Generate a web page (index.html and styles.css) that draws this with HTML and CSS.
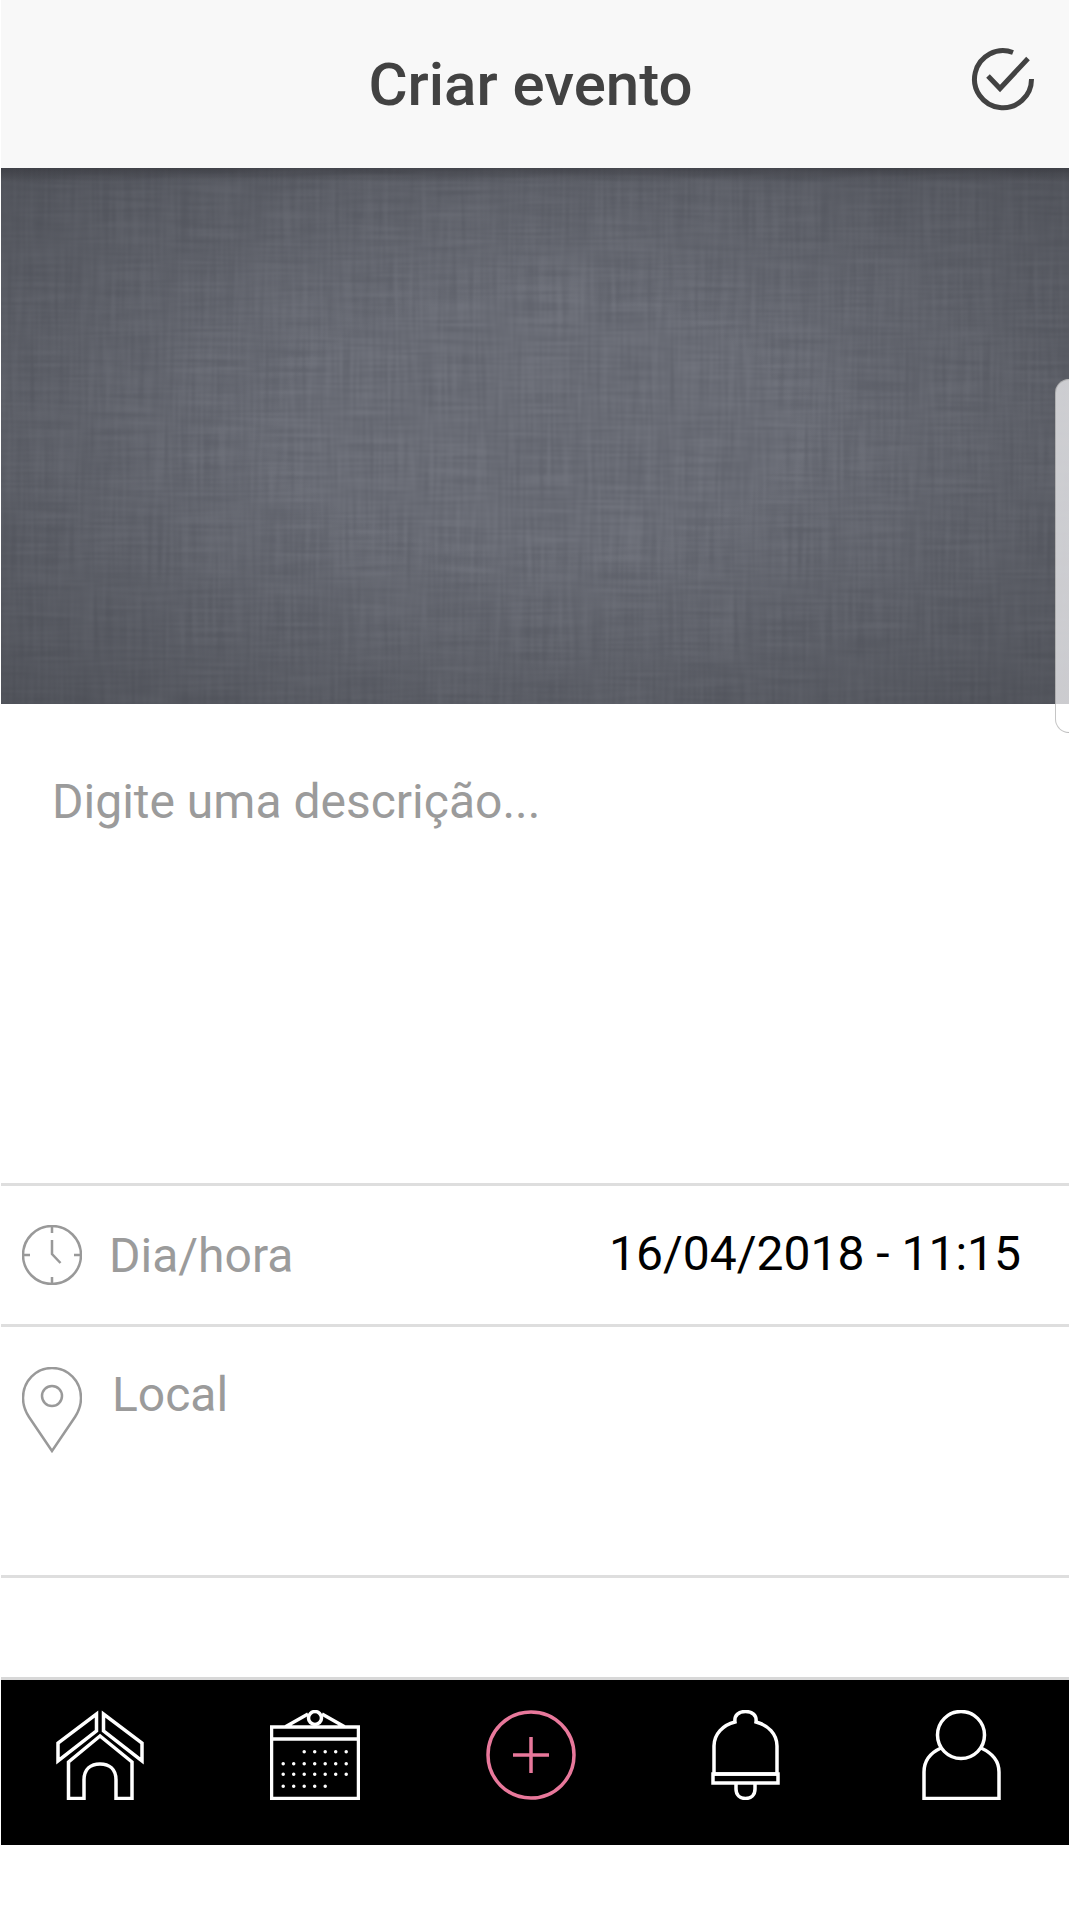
FILE: index.html
```html
<!DOCTYPE html>
<html lang="pt">
<head>
<meta charset="utf-8">
<title>Criar evento</title>
<link rel="stylesheet" href="styles.css">
</head>
<body>
<div class="app">
  <header class="topbar">
    <h1 class="title">Criar evento</h1>
    <svg class="check" viewBox="0 0 70 70" aria-hidden="true">
      <path d="M45 8.500A28.500 28.500 0 1 0 63.500 35" />
      <path d="M20 32L32 44.500L60 14.500" />
    </svg>
  </header>

  <section class="photo">
    <svg class="linen" aria-hidden="true">
      <filter id="weave" x="0" y="0" width="100%" height="100%" color-interpolation-filters="sRGB">
        <feTurbulence type="fractalNoise" baseFrequency="0.012 0.4" numOctaves="2" seed="4" result="h"/>
        <feTurbulence type="fractalNoise" baseFrequency="0.4 0.012" numOctaves="2" seed="9" result="v"/>
        <feComposite in="h" in2="v" operator="arithmetic" k1="0" k2="0.5" k3="0.5" k4="0"/>
        <feColorMatrix type="matrix" values="3 0 0 0 -1  3 0 0 0 -1  3 0 0 0 -1  0 0 0 0 1"/>
        <feGaussianBlur stdDeviation="0.9"/>
      </filter>
      <rect width="100%" height="100%" filter="url(#weave)"/>
    </svg>
    <div class="vignette"></div>
  </section>

  <section class="description">
    <p class="placeholder">Digite uma descrição...</p>
  </section>

  <section class="row row-date">
    <svg class="field-icon" viewBox="0 0 60 60" aria-hidden="true">
      <circle cx="30" cy="30" r="29"/>
      <path d="M30 1V8M30 52V59M1 30H8M52 30H59M30 15V29L38.500 38"/>
    </svg>
    <span class="label">Dia/hora</span>
    <span class="value">16/04/2018 - 11:15</span>
  </section>

  <section class="row row-place">
    <svg class="field-icon pin" viewBox="0 0 60 86" aria-hidden="true">
      <path d="M30 84L7 50C3 44 1 38 1 31C1 14 14 1 30 1C46 1 59 14 59 31C59 38 57 44 53 50Z"/>
      <circle cx="30" cy="29" r="10"/>
    </svg>
    <span class="label label-place">Local</span>
  </section>

  <div class="spacer"></div>

  <nav class="tabbar">
    <svg class="tab" viewBox="0 0 90 90" aria-hidden="true">
      <path d="M41.500 4V21L3 51V33ZM48.500 4V21L87 51V33Z"/>
      <path d="M45 26L13.500 52V88.500H29V70C29 59 36 54 45 54C54 54 61 59 61 70V88.500H77V52Z"/>
    </svg>
    <svg class="tab" viewBox="0 0 90 90" aria-hidden="true">
      <path d="M1.500 17H88.500V88.500H1.500ZM1.500 29H88.500M15 17L38 4M75 17L52 4"/>
      <circle cx="45" cy="8" r="6.500"/>
      <path class="dots" d="M34.200 41.700h.01M44.700 41.700h.01M55.200 41.700h.01M65.700 41.700h.01M76.200 41.700h.01M13.200 53.700h.01M23.700 53.700h.01M34.200 53.700h.01M44.700 53.700h.01M55.200 53.700h.01M65.700 53.700h.01M76.200 53.700h.01M13.200 64.300h.01M23.700 64.300h.01M34.200 64.300h.01M44.700 64.300h.01M55.200 64.300h.01M65.700 64.300h.01M76.200 64.300h.01M13.200 76.300h.01M23.700 76.300h.01M34.200 76.300h.01M44.700 76.300h.01M55.200 76.300h.01"/>
    </svg>
    <svg class="tab tab-add" viewBox="0 0 90 90" aria-hidden="true">
      <circle cx="45" cy="45" r="43"/>
      <path d="M45 27V63M27 45H63"/>
    </svg>
    <svg class="tab" viewBox="0 0 90 90" aria-hidden="true">
      <path d="M13 64V36C13 24 22 15 34 12C33 5 38 1.500 44.500 1.500C51 1.500 56 5 55 12C67 15 76 24 76 36V64Z"/>
      <path d="M12 64H77V73H12ZM35 73V79C35 85 39 88.500 44.500 88.500C50 88.500 54 85 54 79V73"/>
    </svg>
    <svg class="tab" viewBox="0 0 90 90" aria-hidden="true">
      <circle cx="44" cy="25" r="23.500"/>
      <path d="M24 38C13 43 7 51 7 62V88.500H82V62C82 51 75 43 64 38"/>
    </svg>
  </nav>

  <div class="edge-handle"></div>
</div>
</body>
</html>
```

FILE: styles.css
```css
* { box-sizing: border-box; }
html, body { margin: 0; padding: 0; background: #fff; }
body { font-family: Roboto, "Noto Sans", sans-serif; }

.app {
  position: relative;
  width: 1068px;
  margin-left: 1px;
  display: flex;
  flex-direction: column;
}

.topbar {
  height: 168px;
  background: #f8f8f8;
  display: flex;
  align-items: center;
  padding-left: 92px;
  padding-right: 31px;
}
.title {
  flex: 1;
  margin: 0;
  text-align: center;
  font-size: 60px;
  font-weight: 500;
  color: #424242;
  padding-top: 1px;
}
.check {
  width: 70px;
  height: 70px;
  margin-top: -10px;
  fill: none;
  stroke: #424242;
  stroke-width: 5;
}

.photo {
  position: relative;
  height: 536px;
  background: #686b75;
  overflow: hidden;
}
.linen { display: block; width: 100%; height: 100%; opacity: .06; }
.vignette {
  position: absolute;
  inset: 0;
  background:
    linear-gradient(to bottom, rgba(40,40,45,.45), rgba(40,40,45,0) 14px),
    radial-gradient(ellipse 78% 78% at 50% 48%, rgba(48,50,55,0) 30%, rgba(48,50,55,.5) 100%);
}

.description {
  height: 482px;
  padding: 68px 0 0 51px;
  border-bottom: 3px solid #dedede;
}
.placeholder {
  margin: 0;
  font-size: 48px;
  line-height: 60px;
  color: #9b9b9b;
}

.row {
  display: flex;
  border-bottom: 3px solid #dedede;
  padding-left: 21px;
}
.row-date { height: 141px; align-items: center; }
.row-place { height: 251px; align-items: flex-start; padding-top: 40px; }

.field-icon {
  width: 60px;
  height: 60px;
  flex: none;
  fill: none;
  stroke: #999;
  stroke-width: 2.500;
}
.pin { height: 86px; }

.label {
  margin-left: 27px;
  margin-top: 2px;
  font-size: 48px;
  line-height: 60px;
  color: #9b9b9b;
}
.label-place { margin-left: 30px; margin-top: -2px; }
.value {
  margin-left: auto;
  margin-right: 48px;
  margin-top: -2px;
  font-size: 48px;
  line-height: 60px;
  color: #000;
}

.spacer {
  height: 102px;
  border-bottom: 3px solid #d8d8d8;
}

.tabbar {
  height: 165px;
  background: #000;
  display: flex;
  align-items: flex-start;
  gap: 125.500px;
  padding: 30px 0 0 53.500px;
}
.tab {
  width: 90px;
  height: 90px;
  flex: none;
  fill: none;
  stroke: #fff;
  stroke-width: 3.500;
}
.dots { stroke-width: 3.500; stroke-linecap: round; }
.tab-add { stroke: #e8789b; stroke-width: 3.500; }

.edge-handle {
  position: absolute;
  top: 379px;
  right: 0;
  width: 14px;
  height: 354px;
  background: linear-gradient(to bottom, rgba(225,225,228,.85) 0, rgba(225,225,228,.85) 92%, rgba(255,255,255,.9) 92%);
  border: 1px solid rgba(150,150,150,.55);
  border-right: 0;
  border-radius: 16px 0 0 16px;
}
```
